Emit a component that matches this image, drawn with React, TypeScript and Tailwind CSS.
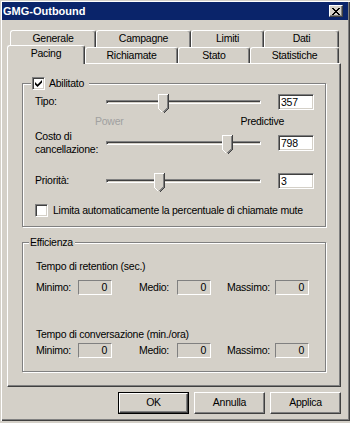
import React from 'react';

const FONT = "font-['Liberation_Sans',Arial,sans-serif]";

const sunken =
  'border border-t-[#808080] border-l-[#808080] border-b-white border-r-white shadow-[inset_1px_1px_0_#404040,inset_-1px_-1px_0_#d4d0c8]';
const raised =
  'border border-t-white border-l-white border-b-[#404040] border-r-[#404040] shadow-[inset_-1px_-1px_0_#808080]';

const Tab = ({ label, w, selected }: { label: string; w: string; selected?: boolean }) => (
  <div
    className={`${w} flex items-center justify-center rounded-t-[3px] border-l border-t border-r border-l-white border-t-white border-r-[#404040] shadow-[inset_-1px_0_0_#808080] bg-[#d4d0c8] ${
      selected ? 'relative z-10 h-[19px] -mb-px pb-[3px]' : 'h-full'
    }`}
  >
    {label}
  </div>
);

const Edit = ({ value }: { value: string }) => (
  <div className={`w-[36px] h-[16px] bg-white pl-[2px] leading-[14px] ml-[13px] ${sunken}`}>{value}</div>
);

const Slider = ({ value, max }: { value: number; max: number }) => {
  const left = Math.round(3 + (value / max) * 145);
  return (
    <div className="relative w-[162px] h-[20px] flex items-center">
      <div className="ml-[3px] mr-[4px] flex-1 h-[4px] border border-t-[#808080] border-l-[#808080] border-b-white border-r-white shadow-[inset_1px_1px_0_#404040] bg-[#d4d0c8]" />
      <svg
        className="absolute top-[2px]"
        style={{ left }}
        width="11"
        height="19"
        viewBox="0 0 11 19"
        shapeRendering="crispEdges"
      >
        <polygon points="0,0 11,0 11,14 5.5,19 0,14" fill="#d4d0c8" />
        <path d="M0.5 14 V0.5 H10" stroke="#fff" fill="none" />
        <path d="M10.5 0 V14.5 L6 19" stroke="#404040" fill="none" />
        <path d="M9.5 1 V14 L5.5 18" stroke="#808080" fill="none" />
        <path d="M0.5 14.5 L4.5 18.5" stroke="#fff" fill="none" />
      </svg>
    </div>
  );
};

const Check = ({ checked }: { checked?: boolean }) => (
  <span className={`w-[13px] h-[13px] bg-white inline-flex items-center justify-center shrink-0 ${sunken}`}>
    {checked && (
      <svg width="7" height="7" viewBox="0 0 7 7">
        <polygon points="0,2 2.5,4.5 7,0 7,2.5 2.5,7 0,4.5" fill="#000" />
      </svg>
    )}
  </span>
);

const ReadBox = () => (
  <div className="w-[34px] h-[15px] bg-[#d4d0c8] border border-t-[#808080] border-l-[#808080] border-b-white border-r-white text-right pr-[4px] leading-[13px]">
    0
  </div>
);

const StatRow = ({ mt }: { mt: string }) => (
  <div className={`flex items-center h-[15px] ${mt}`}>
    <span className="w-[42px]">Minimo:</span>
    <ReadBox />
    <span className="w-[38px] ml-[27px]">Medio:</span>
    <ReadBox />
    <span className="w-[48px] ml-[16px]">Massimo:</span>
    <ReadBox />
  </div>
);

const Button = ({ label, def }: { label: string; def?: boolean }) => (
  <div className={`w-[71px] h-[22px] ${def ? 'border border-black' : ''}`}>
    <div className={`w-full h-full flex items-center justify-center ${raised}`}>{label}</div>
  </div>
);

export default function App() {
  return (
    <div className={`w-[350px] h-[423px] bg-[#d4d0c8] ${FONT} text-[10.5px] tracking-[-0.25px] text-black`}>
      <div className="w-[350px] h-[421px] flex flex-col px-[2px] pt-[2px] shadow-[inset_1px_1px_0_#d4d0c8,inset_2px_2px_0_#fff,inset_-1px_-1px_0_#404040,inset_-2px_-2px_0_#808080]">
        {/* title bar */}
        <div className="h-[18px] bg-[#0a246a] flex items-center justify-between pl-[1px] pr-[5px]">
          <span className="text-white font-bold text-[11px] tracking-normal">GMG-Outbound</span>
          <div className={`w-[14px] h-[12px] bg-[#d4d0c8] flex items-center justify-center ${raised}`}>
            <svg width="8" height="7" viewBox="0 0 8 7" shapeRendering="crispEdges">
              <path d="M0 0 L7 7 M1 0 L8 7 M7 0 L0 7 M8 0 L1 7" stroke="#000" strokeWidth="1" />
            </svg>
          </div>
        </div>

        <div className="flex flex-col pl-[5px] pr-[7px] mt-[10px]">
          {/* tabs */}
          <div className="flex h-[17px] pl-[3px]">
            <Tab label="Generale" w="w-[86px]" />
            <Tab label="Campagne" w="w-[95px]" />
            <Tab label="Limiti" w="w-[73px]" />
            <Tab label="Dati" w="w-[75px]" />
          </div>
          <div className="flex h-[16px] items-end">
            <Tab label="Pacing" w="w-[78px]" selected />
            <Tab label="Richiamate" w="w-[93px]" />
            <Tab label="Stato" w="w-[72px]" />
            <Tab label="Statistiche" w="w-[89px]" />
          </div>

          {/* panel */}
          <div className="h-[324px] border-l border-t border-r border-b border-l-white border-t-white border-r-[#404040] border-b-[#404040] shadow-[inset_-1px_-1px_0_#808080] pl-[14px] pt-[13px]">
            <fieldset className="w-[304px] border border-[#808080] shadow-[inset_1px_1px_0_#fff,1px_1px_0_#fff] pl-[12px] pr-[11px] pt-[2px] pb-[9px]">
              <legend className="ml-[-4px] pl-[1px] pr-[5px] bg-[#d4d0c8] leading-[13px]">
                <span className="inline-flex items-center gap-[4px] h-[13px]">
                  <Check checked />
                  Abilitato
                </span>
              </legend>

              <div className="flex items-center h-[20px]">
                <span className="w-[68px]">Tipo:</span>
                <Slider value={357} max={1000} />
                <Edit value="357" />
              </div>
              <div className="flex justify-between items-center w-[189px] ml-[60px] h-[16px] mt-[2px]">
                <span className="text-[#a0a0a0]">Power</span>
                <span>Predictive</span>
              </div>
              <div className="flex items-center h-[26px]">
                <span className="w-[68px] leading-[13px]">
                  Costo di
                  <br />
                  cancellazione:
                </span>
                <Slider value={798} max={1000} />
                <Edit value="798" />
              </div>
              <div className="flex items-center h-[20px] mt-[15px]">
                <span className="w-[68px]">Priorità:</span>
                <Slider value={3} max={9} />
                <Edit value="3" />
              </div>
              <div className="flex items-center gap-[5px] h-[13px] mt-[13px]">
                <Check />
                <span className="whitespace-nowrap">Limita automaticamente la percentuale di chiamate mute</span>
              </div>
            </fieldset>

            <fieldset className="w-[304px] mt-[9px] border border-[#808080] shadow-[inset_1px_1px_0_#fff,1px_1px_0_#fff] pl-[13px] pr-[11px] pt-[10px] pb-[13px]">
              <legend className="ml-[-7px] pl-[1px] pr-[2px] bg-[#d4d0c8] leading-[13px]">Efficienza</legend>
              <div className="h-[14px] leading-[14px]">Tempo di retention (sec.)</div>
              <StatRow mt="mt-[7px]" />
              <div className="h-[14px] leading-[14px] mt-[32px]">Tempo di conversazione (min./ora)</div>
              <StatRow mt="mt-[2px]" />
            </fieldset>
          </div>

          {/* buttons */}
          <div className="flex justify-end gap-[5px] mt-[5px]">
            <Button label="OK" def />
            <Button label="Annulla" />
            <Button label="Applica" />
          </div>
        </div>
      </div>
    </div>
  );
}
